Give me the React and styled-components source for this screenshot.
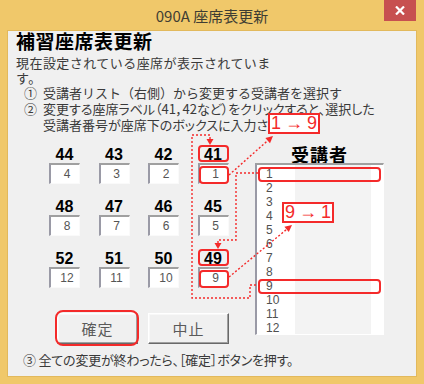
import React from 'react';
import styled, { createGlobalStyle } from 'styled-components';

const JP = `"Noto Sans CJK JP", "Noto Sans", sans-serif`;
const LAT = `"Liberation Sans", Arial, sans-serif`;
const RED = '#f42a2a';
const FRAME = '#f0c86a';

const Global = createGlobalStyle`
  html, body { margin: 0; padding: 0; width: 424px; height: 384px; overflow: hidden; background: ${FRAME}; }
  #root { width: 424px; height: 384px; }
`;

const Window = styled.div`
  position: relative;
  width: 424px;
  height: 384px;
  box-sizing: border-box;
  padding: 0 8px 8px;
  background: ${FRAME};
  display: flex;
  flex-direction: column;
  font-family: ${JP};
`;

const TitleBar = styled.div`
  height: 31px;
  flex: none;
  display: grid;
  grid-template-columns: 1fr auto 1fr;
  align-items: start;
`;

const Title = styled.div`
  grid-column: 2;
  padding-top: 8px;
  font-size: 15px;
  line-height: 16px;
  color: #3f3d33;
  white-space: nowrap;
`;

const CloseButton = styled.div`
  grid-column: 3;
  justify-self: end;
  width: 32px;
  height: 21px;
  background: #c75050;
  display: flex;
  align-items: center;
  justify-content: center;
`;

const Client = styled.div`
  flex: 1;
  background: #f0f0f0;
  box-shadow: 0 0 0 1px #e2b95c;
  padding-left: 8px;
  display: flex;
  flex-direction: column;
  color: #3a3a3a;
`;

const Heading = styled.h1`
  margin: 0;
  font-size: 19px;
  line-height: 20px;
  font-weight: 700;
  color: #000;
  letter-spacing: 0.5px;
`;

const Desc = styled.p`
  margin: 4px 0 0;
  font-size: 13px;
  line-height: 15px;
  letter-spacing: 0.45px;
`;

const Steps = styled.div`
  margin-left: 8px;
  display: flex;
  flex-direction: column;
`;

const Step = styled.div`
  display: grid;
  grid-template-columns: 19px 1fr;
  font-size: 13px;
  line-height: 16px;
  white-space: nowrap;
  letter-spacing: ${p => p.$ls || 0}px;
  font-feature-settings: ${p => (p.$palt ? '"palt"' : 'normal')};
`;

const Marker = styled.span`
  letter-spacing: 0;
`;

const Body = styled.div`
  margin-top: 14px;
  display: flex;
  align-items: flex-start;
`;

const LeftCol = styled.div`
  margin-left: 33px;
  width: 182px;
  display: flex;
  flex-direction: column;
`;

const SeatGrid = styled.div`
  display: grid;
  grid-template-columns: repeat(4, 31px);
  column-gap: 18.5px;
  row-gap: 15px;
`;

const Seat = styled.div`
  display: flex;
  flex-direction: column;
`;

const SeatLabel = styled.div`
  position: relative;
  height: 16px;
  font-family: ${LAT};
  font-weight: 700;
  font-size: 16px;
  line-height: 16px;
  text-align: center;
  color: #000;
  &::after {
    content: '';
    display: ${p => (p.$mark ? 'block' : 'none')};
    position: absolute;
    top: -2px;
    bottom: 1px;
    left: 0;
    right: 0;
    border: 2px solid ${RED};
    border-radius: 4px;
  }
`;

const SeatField = styled.div`
  position: relative;
  box-sizing: border-box;
  height: 21px;
  background: #fff;
  border-style: solid;
  border-width: 2px 1px 1px 2px;
  border-color: #a0a0a0 #fafafa #fafafa #9a9aa6;
  padding-left: 4px;
  font-family: ${LAT};
  font-size: 12px;
  line-height: 18px;
  text-align: center;
  color: #555;
  &::after {
    content: '';
    display: ${p => (p.$mark ? 'block' : 'none')};
    position: absolute;
    top: 1px;
    bottom: -1px;
    left: -1px;
    right: -1px;
    border: 2px solid ${RED};
    border-radius: 4px;
  }
`;

const ButtonRow = styled.div`
  margin: 25px 0 0 8px;
  display: flex;
  gap: 10px;
`;

const Button = styled.div`
  position: relative;
  box-sizing: border-box;
  width: 81px;
  height: 31px;
  background: #f0f0f0;
  border: 1px solid;
  border-color: #fff #696969 #696969 #fff;
  box-shadow: inset -1px -1px 0 #a0a0a0, inset 1px 1px 0 #f8f8f8;
  display: flex;
  align-items: center;
  justify-content: center;
  font-size: 15px;
  color: #5a5a5a;
  letter-spacing: 1px;
  &::after {
    content: '';
    display: ${p => (p.$mark ? 'block' : 'none')};
    position: absolute;
    top: -4px;
    bottom: -3px;
    left: -3px;
    right: -2px;
    border: 2px solid ${RED};
    border-radius: 8px;
  }
`;

const RightCol = styled.div`
  margin-left: 24px;
  width: 129px;
  display: flex;
  flex-direction: column;
`;

const ListLabel = styled.div`
  margin-top: -1px;
  font-size: 18px;
  line-height: 17px;
  font-weight: 700;
  text-align: center;
  color: #000;
  letter-spacing: 1px;
`;

const ListBox = styled.div`
  box-sizing: border-box;
  height: 172px;
  border-style: solid;
  border-width: 2px 1px 1px 2px;
  border-color: #a0a0a0 #fff #fff #9a9aa6;
  padding-top: 2px;
  background: linear-gradient(to right, #fff 0 38px, #f3f3f3 38px 114px, #fff 114px);
  display: flex;
  flex-direction: column;
`;

const ListItem = styled.div`
  position: relative;
  height: 14px;
  padding-left: 9px;
  font-family: ${LAT};
  font-size: 12px;
  line-height: 14px;
  color: #505050;
  &::after {
    content: '';
    display: ${p => (p.$mark ? 'block' : 'none')};
    position: absolute;
    top: 0;
    bottom: -1px;
    left: 1px;
    right: 2px;
    border: 2px solid ${RED};
    border-radius: 4px;
  }
`;

const Note = styled.p`
  margin: 8px 0 0 7px;
  font-size: 13px;
  line-height: 16px;
  white-space: nowrap;
  font-feature-settings: "palt";
  letter-spacing: -0.2px;
`;

const Callout = styled.div`
  position: absolute;
  left: ${p => p.$x}px;
  top: ${p => p.$y}px;
  box-sizing: border-box;
  width: fit-content;
  min-width: 51px;
  height: 21px;
  padding: 0 1px;
  background: #fff;
  border: 2px solid ${RED};
  color: ${RED};
  font-family: ${LAT};
  font-size: 18px;
  line-height: 17px;
  word-spacing: -1px;
  display: flex;
  align-items: center;
  justify-content: center;
  white-space: nowrap;
`;

const Overlay = styled.svg`
  position: absolute;
  left: 0;
  top: 0;
  pointer-events: none;
`;

const rows = [
  [[44, 4], [43, 3], [42, 2], [41, 1]],
  [[48, 8], [47, 7], [46, 6], [45, 5]],
  [[52, 12], [51, 11], [50, 10], [49, 9]],
];
const marked = new Set([41, 49]);

export default function App() {
  return (
    <>
      <Global />
      <Window>
        <TitleBar>
          <Title>090A 座席表更新</Title>
          <CloseButton>
            <svg width="10" height="9" viewBox="0 0 10 9">
              <path d="M1 0.5 L9 8.5 M9 0.5 L1 8.5" stroke="#fff" strokeWidth="2.2" />
            </svg>
          </CloseButton>
        </TitleBar>
        <Client>
          <Heading>補習座席表更新</Heading>
          <Desc>
            現在設定されている座席が表示されていま
            <br />
            す。
          </Desc>
          <Steps>
            <Step>
              <Marker>①</Marker>
              <span>受講者リスト（右側）から変更する受講者を選択す</span>
            </Step>
            <Step $palt>
              <Marker>②</Marker>
              <span>変更する座席ラベル（41，42など）をクリックすると、選択した</span>
            </Step>
            <Step $palt>
              <span />
              <span>受講者番号が座席下のボックスに入力されます。</span>
            </Step>
          </Steps>
          <Body>
            <LeftCol>
              <SeatGrid>
                {rows.flat().map(([label, num]) => (
                  <Seat key={label}>
                    <SeatLabel $mark={marked.has(label)}>{label}</SeatLabel>
                    <SeatField $mark={marked.has(label)}>{num}</SeatField>
                  </Seat>
                ))}
              </SeatGrid>
              <ButtonRow>
                <Button $mark>確定</Button>
                <Button>中止</Button>
              </ButtonRow>
            </LeftCol>
            <RightCol>
              <ListLabel>受講者</ListLabel>
              <ListBox>
                {Array.from({ length: 12 }, (_, i) => i + 1).map(n => (
                  <ListItem key={n} $mark={n === 1 || n === 9}>{n}</ListItem>
                ))}
              </ListBox>
            </RightCol>
          </Body>
          <Note>③ 全ての変更が終わったら、［確定］ボタンを押す。</Note>
        </Client>
        <Callout $x={268} $y={113}>1 → 9</Callout>
        <Callout $x={282} $y={202}>9 → 1</Callout>
        <Overlay width="424" height="384" viewBox="0 0 424 384">
          <g fill="none" stroke={RED} strokeWidth="1.4" strokeDasharray="2 2">
            <path d="M258 173 H236 V240 H218 V243" />
            <path d="M260 285 H250 V298 H192 V135 H210 V139" />
            <path d="M229 175 L267.7 140.6" />
            <path d="M229 277 L286.6 229.4" />
          </g>
          <g fill={RED}>
            <polygon points="214.5,243 221.5,243 218,249" />
            <polygon points="206.5,139 213.5,139 210,145" />
            <polygon points="273,136 270,143.2 265.4,138" />
            <polygon points="292,225 288.8,232.1 284.4,226.8" />
          </g>
        </Overlay>
      </Window>
    </>
  );
}
